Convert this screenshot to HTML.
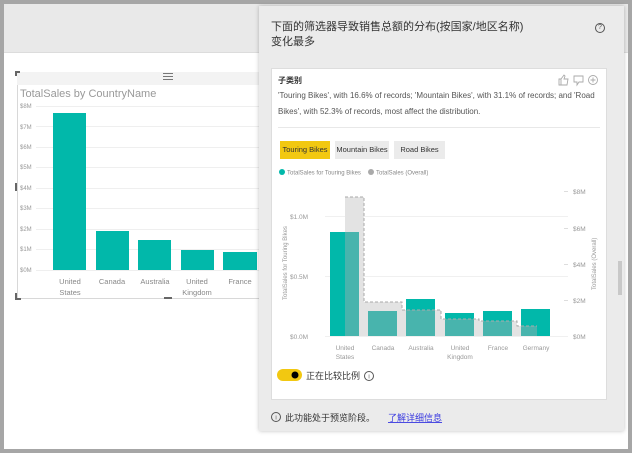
<!DOCTYPE html>
<html><head><meta charset="utf-8"><style>
*{margin:0;padding:0;box-sizing:border-box}
body{width:632px;height:453px;position:relative;overflow:hidden;background:#a6a6a6;font-family:"Liberation Sans","Noto Sans CJK SC",sans-serif}
.abs{position:absolute}
</style></head><body>
<div class="abs" style="left:4px;top:4px;width:624px;height:445px;background:#fff"></div>
<div class="abs" style="left:4px;top:4px;width:624px;height:49px;background:#e9e9e9;border-bottom:1px solid #dcdcdc"></div>

<div class="abs" style="left:17px;top:72px;width:245px;height:227px;border:1px solid #d8d8d8;border-right:none"></div>
<div class="abs" style="left:17px;top:72px;width:245px;height:13px;background:#f3f3f3"></div>
<svg class="abs" style="left:0;top:0" width="270" height="310">
<path d="M16 76V72H20" stroke="#666" stroke-width="2" fill="none"/>
<path d="M16 293V299H21" stroke="#666" stroke-width="2" fill="none"/>
<rect x="15" y="183" width="2" height="8" fill="#666"/>
<rect x="164" y="297" width="8" height="2" fill="#666"/>
<rect x="163" y="73" width="10" height="1" fill="#777"/><rect x="163" y="76" width="10" height="1" fill="#777"/><rect x="163" y="79" width="10" height="1" fill="#777"/>
<text x="20" y="97" font-size="11" fill="#999" font-family="Liberation Sans">TotalSales by CountryName</text>
<g stroke="#efefef" stroke-width="1">
<line x1="36" y1="106.5" x2="260" y2="106.5"/><line x1="36" y1="126.5" x2="260" y2="126.5"/><line x1="36" y1="147.5" x2="260" y2="147.5"/><line x1="36" y1="167.5" x2="260" y2="167.5"/><line x1="36" y1="188.5" x2="260" y2="188.5"/><line x1="36" y1="208.5" x2="260" y2="208.5"/><line x1="36" y1="229.5" x2="260" y2="229.5"/><line x1="36" y1="249.5" x2="260" y2="249.5"/><line x1="36" y1="270.5" x2="260" y2="270.5"/></g>
<g font-size="6" fill="#999" font-family="Liberation Sans">
<text x="20" y="108">$8M</text><text x="20" y="129">$7M</text><text x="20" y="149">$6M</text><text x="20" y="169">$5M</text><text x="20" y="190">$4M</text><text x="20" y="210">$3M</text><text x="20" y="231">$2M</text><text x="20" y="251">$1M</text><text x="20" y="272">$0M</text></g>
<g fill="#01b8aa"><rect x="53" y="113" width="33" height="157"/><rect x="96" y="231" width="33" height="39"/><rect x="138" y="240" width="33" height="30"/><rect x="181" y="250" width="33" height="20"/><rect x="223" y="252" width="34" height="18"/></g>
<g font-size="7.5" fill="#888" text-anchor="middle" font-family="Liberation Sans">
<text x="70" y="284">United</text><text x="70" y="295">States</text><text x="112" y="284">Canada</text><text x="155" y="284">Australia</text><text x="197" y="284">United</text><text x="197" y="295">Kingdom</text><text x="240" y="284">France</text></g>
</svg>

<div class="abs" style="left:259px;top:6px;width:365px;height:425px;background:#ebebeb;box-shadow:0 0 4px rgba(0,0,0,.25)"></div>
<div class="abs" style="left:271px;top:20px;font-size:11px;line-height:15px;color:#333;width:300px">下面的筛选器导致销售总额的分布(按国家/地区名称)<br>变化最多</div>
<div class="abs" style="left:595px;top:23px;width:10px;height:10px;border:1px solid #555;border-radius:50%;font-size:7px;line-height:8px;text-align:center;color:#555">?</div>
<div class="abs" style="left:271px;top:68px;width:336px;height:332px;background:#fff;border:1px solid #ddd"></div>
<div class="abs" style="left:278px;top:75px;font-size:8px;font-weight:bold;color:#333">子类别</div>
<svg class="abs" style="left:558px;top:73px" width="45" height="14">
<path d="M1 6h2v6H1zM3 6l3-4 1 1-1 3h4l-1 6H3" fill="none" stroke="#aaa" stroke-width="0.9"/>
<path d="M16 3h9v6h-4l-2 3v-3h-3z" fill="none" stroke="#aaa" stroke-width="0.9"/>
<circle cx="35" cy="7" r="4.5" fill="none" stroke="#aaa" stroke-width="0.9"/><path d="M35 4.5v5M32.5 7h5" stroke="#aaa" stroke-width="0.9"/>
</svg>
<div class="abs" style="left:278px;top:88px;width:325px;font-size:8px;line-height:16px;color:#555">'Touring Bikes', with 16.6% of records; 'Mountain Bikes', with 31.1% of records; and 'Road Bikes', with 52.3% of records, most affect the distribution.</div>
<div class="abs" style="left:278px;top:127px;width:322px;height:1px;background:#e8e8e8"></div>
<div class="abs" style="left:280px;top:141px;width:50px;height:18px;background:#f2c811;font-size:7.5px;line-height:18px;text-align:center;color:#333">Touring Bikes</div>
<div class="abs" style="left:335px;top:141px;width:54px;height:18px;background:#ebebeb;font-size:7.5px;line-height:18px;text-align:center;color:#333">Mountain Bikes</div>
<div class="abs" style="left:394px;top:141px;width:51px;height:18px;background:#ebebeb;font-size:7.5px;line-height:18px;text-align:center;color:#333">Road Bikes</div>
<svg class="abs" style="left:258px;top:160px" width="374" height="240">
<circle cx="24" cy="12" r="3" fill="#01b8aa"/><text x="29" y="14.5" font-size="6" fill="#888" font-family="Liberation Sans">TotalSales for Touring Bikes</text>
<circle cx="113" cy="12" r="3" fill="#aaa"/><text x="118" y="14.5" font-size="6" fill="#888" font-family="Liberation Sans">TotalSales (Overall)</text>
</svg>
<svg class="abs" style="left:0;top:0" width="632" height="453">
<g stroke="#f0f0f0"><line x1="325" y1="216.5" x2="568" y2="216.5"/><line x1="325" y1="276.5" x2="568" y2="276.5"/><line x1="325" y1="336.5" x2="568" y2="336.5"/></g>
<g stroke="#ddd"><line x1="564" y1="191.5" x2="568" y2="191.5"/><line x1="564" y1="228.5" x2="568" y2="228.5"/><line x1="564" y1="264.5" x2="568" y2="264.5"/><line x1="564" y1="300.5" x2="568" y2="300.5"/></g>
<polygon points="345,336 345,197 364,197 364,302 402,302 402,310 441,310 441,319 479,319 479,321 517,321 517,326 537,326 537,336" fill="#e3e3e3"/>
<g fill="#01b8aa"><rect x="330" y="232" width="29" height="104"/><rect x="368" y="311" width="29" height="25"/><rect x="406" y="299" width="29" height="37"/><rect x="445" y="313" width="29" height="23"/><rect x="483" y="311" width="29" height="25"/><rect x="521" y="309" width="29" height="27"/></g>
<g fill="#48b4ad"><rect x="345" y="232" width="14" height="104"/><rect x="368" y="311" width="29" height="25"/><rect x="406" y="310" width="29" height="26"/><rect x="445" y="319" width="29" height="17"/><rect x="483" y="321" width="29" height="15"/><rect x="521" y="326" width="16" height="10"/></g>
<polyline points="345,197 364,197 364,302 402,302 402,310 441,310 441,319 479,319 479,321 517,321 517,326 537,326" fill="none" stroke="#aaa" stroke-dasharray="3,2" stroke-width="1"/>
<g font-size="6.5" fill="#999" font-family="Liberation Sans">
<text x="290" y="219">$1.0M</text><text x="290" y="279">$0.5M</text><text x="290" y="339">$0.0M</text>
<text x="573" y="194">$8M</text><text x="573" y="231">$6M</text><text x="573" y="267">$4M</text><text x="573" y="303">$2M</text><text x="573" y="339">$0M</text></g>
<text transform="translate(287,300) rotate(-90)" font-size="6" fill="#999" font-family="Liberation Sans">TotalSales for Touring Bikes</text>
<text transform="translate(596,290) rotate(-90)" font-size="6" fill="#999" font-family="Liberation Sans">TotalSales (Overall)</text>
<g font-size="6.5" fill="#999" text-anchor="middle" font-family="Liberation Sans">
<text x="345" y="350">United</text><text x="345" y="359">States</text><text x="383" y="350">Canada</text><text x="421" y="350">Australia</text><text x="460" y="350">United</text><text x="460" y="359">Kingdom</text><text x="498" y="350">France</text><text x="536" y="350">Germany</text></g>
<rect x="277" y="369" width="25" height="12" rx="6" fill="#f2c811"/><circle cx="295" cy="375" r="3.5" fill="#000"/>
<text x="306" y="379" font-size="9" fill="#333">正在比较比例</text>
<circle cx="369" cy="376" r="4.5" fill="none" stroke="#555"/><text x="369" y="378.5" font-size="6" text-anchor="middle" fill="#555">i</text>
<circle cx="276" cy="417" r="4.5" fill="none" stroke="#555"/><text x="276" y="419.5" font-size="6" text-anchor="middle" fill="#555">i</text>
<text x="285" y="421" font-size="9" fill="#333">此功能处于预览阶段。</text>
<text x="388" y="421" font-size="9" fill="#3a3ae0" text-decoration="underline">了解详细信息</text>
<rect x="618" y="261" width="4" height="34" fill="#c8c8c8"/>
</svg>
</body></html>
